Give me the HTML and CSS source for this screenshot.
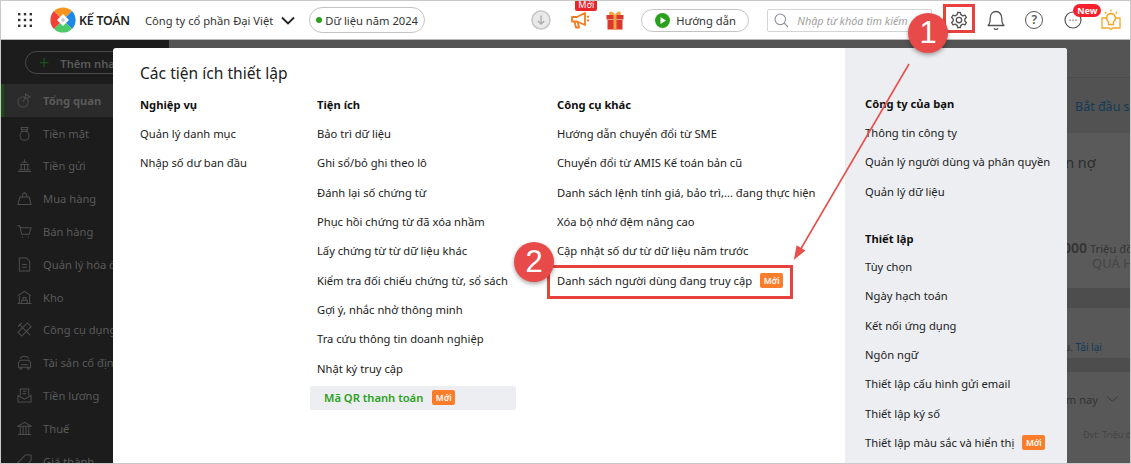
FILE: index.html
```html
<!DOCTYPE html>
<html lang="en">
<head>
    <title>Kế toán</title>
    <link rel="stylesheet" href="styles.css">
</head>
<body>
<div class="app">
    <header class="top_bar">
        <svg class="grid_icon" width="14" height="14" viewBox="0 0 14 14" fill="#333">
            <rect x="0" y="0" width="2.4" height="2.4"/><rect x="5.8" y="0" width="2.4" height="2.4"/><rect x="11.6" y="0" width="2.4" height="2.4"/>
            <rect x="0" y="5.8" width="2.4" height="2.4"/><rect x="5.8" y="5.8" width="2.4" height="2.4"/><rect x="11.6" y="5.8" width="2.4" height="2.4"/>
            <rect x="0" y="11.6" width="2.4" height="2.4"/><rect x="5.8" y="11.6" width="2.4" height="2.4"/><rect x="11.6" y="11.6" width="2.4" height="2.4"/>
        </svg>
        <svg class="logo" width="26" height="26" viewBox="0 0 26 26">
            <path d="M13 13 L4 4 A13 13 0 0 1 22 4 Z" fill="#f7941d"/>
            <path d="M13 13 L22 4 A13 13 0 0 1 22 22 Z" fill="#1e88e5"/>
            <path d="M13 13 L22 22 A13 13 0 0 1 4 22 Z" fill="#4cca6a"/>
            <path d="M13 13 L4 22 A13 13 0 0 1 4 4 Z" fill="#ef4136"/>
            <path d="M13 7 L19 13 L13 19 L7 13 Z" fill="#fff"/>
            <path d="M13 10.5 L15.5 13 L13 15.5 L10.5 13 Z" fill="#ccc"/>
        </svg>
        <span class="brand">KẾ TOÁN</span>
        <span class="company">Công ty cổ phần Đại Việt</span>
        <svg class="chevron" width="14" height="9" viewBox="0 0 14 9" fill="none" stroke="#222" stroke-width="1.8"><path d="M1 1.5 L7 7.5 L13 1.5"/></svg>
        <div class="year_pill"><i class="dot"></i>Dữ liệu năm 2024</div>

        <svg class="download" width="20" height="20" viewBox="0 0 20 20" fill="none">
            <circle cx="10" cy="10" r="9" fill="#e9e9e9" stroke="#c6c6c6" stroke-width="1.5"/>
            <path d="M10 5.5 V14 M6.8 11 L10 14.2 L13.2 11" stroke="#aaa" stroke-width="1.3"/>
        </svg>
        <div class="megaphone">
            <svg width="20" height="20" viewBox="0 0 20 20" fill="none" stroke="#f47b20" stroke-width="1.8" stroke-linejoin="round">
                <path d="M2 7 H7 L15 3 V15 L7 11.5 H2 Z"/>
                <path d="M4.5 11.5 L6 17.5 H9 L7.8 12"/>
                <path d="M17 7 L19 6.4 M17 10 L19 10.8"/>
            </svg>
            <span class="moi_red">Mới</span>
        </div>
        <svg class="gift" width="18" height="20" viewBox="0 0 18 20">
            <path d="M9 5 C6 0 2 1 3.5 5 Z M9 5 C12 0 16 1 14.500 5 Z" fill="#f2a33a"/>
            <rect x="0.5" y="5" width="17" height="4.500" fill="#d8382e"/>
            <rect x="1.500" y="10" width="15" height="9.500" fill="#d8382e"/>
            <rect x="7.500" y="5" width="3" height="14.500" fill="#f2a33a"/>
        </svg>
        <div class="guide_btn">
            <svg width="15" height="15" viewBox="0 0 15 15"><circle cx="7.500" cy="7.500" r="7.500" fill="#2ba01e"/><path d="M5.500 4 L11 7.500 L5.500 11 Z" fill="#fff"/></svg>
            Hướng dẫn
        </div>
        <div class="search_box">
            <svg width="15" height="15" viewBox="0 0 15 15" fill="none" stroke="#8a8f99" stroke-width="1.100"><circle cx="6.300" cy="6.300" r="5.300"/><path d="M10.200 10.200 L14 14"/></svg>
            <span>Nhập từ khóa tìm kiếm</span>
        </div>
        <svg class="gear" width="18" height="18" viewBox="0 0 24 24" fill="none" stroke="#555" stroke-width="1.800" stroke-linejoin="round">
            <circle cx="12" cy="12" r="3.600"/>
            <path d="M10.200 2 H13.800 L14.500 4.900 L17.200 6.400 L20 5.600 L21.800 8.700 L19.700 10.800 V13.200 L21.800 15.300 L20 18.400 L17.200 17.600 L14.500 19.100 L13.800 22 H10.200 L9.500 19.100 L6.800 17.600 L4 18.400 L2.200 15.300 L4.300 13.200 V10.800 L2.200 8.700 L4 5.600 L6.800 6.400 L9.500 4.900 Z"/>
        </svg>
        <svg class="bell" width="18" height="21" viewBox="0 0 18 21" fill="none" stroke="#555" stroke-width="1.300" stroke-linejoin="round">
            <path d="M1 15.500 C3 14 3.200 12 3.200 8.500 C3.200 4.500 5.500 1.500 9 1.500 C12.500 1.500 14.800 4.500 14.800 8.500 C14.800 12 15 14 17 15.500 Z"/>
            <path d="M6.800 18.500 C8 19.700 10 19.700 11.200 18.500"/>
        </svg>
        <div class="help">?</div>
        <div class="chat">
            <svg width="18" height="18" viewBox="0 0 18 18" fill="none" stroke="#555" stroke-width="1.200"><circle cx="9" cy="9" r="8"/><path d="M5.500 9.200 H6.500 M8.500 9.200 H9.500 M11.500 9.200 H12.500" stroke-width="1.500"/></svg>
            <span class="new_badge">New</span>
        </div>
        <svg class="bulb" width="20" height="22" viewBox="0 0 20 22" fill="none" stroke="#f5a623" stroke-width="1.300">
            <path d="M5 9 H1 V19 H8 L10 20.500 L12 19 H19 V9 H15"/>
            <path d="M10 4.500 A4.500 4.500 0 0 1 12.500 12.700 V15.500 H7.500 V12.700 A4.500 4.500 0 0 1 10 4.500 Z"/>
            <path d="M10 0.500 V2.500 M3.800 3 L5.300 4.500 M16.200 3 L14.700 4.500"/>
        </svg>
    </header>

    <div class="below">
        <aside class="sidebar">
            <div class="add_wrap"><div class="add_btn"><b>+</b>Thêm nhanh</div></div>
            <div class="side_item active">
                <svg class="side_icon" viewBox="0 0 16 16"><circle cx="6.500" cy="9.500" r="5.500"/><path d="M6.500 9.500 L9 4 M9 6 V1 L14 4 L9 6"/></svg>Tổng quan
            </div>
            <div class="side_item">
                <svg class="side_icon" viewBox="0 0 16 16"><circle cx="8" cy="10.500" r="4.800"/><path d="M5.500 6.500 L4.500 1.500 H11.500 L10.500 6.500 M5.500 4 H10.500"/></svg>Tiền mặt
            </div>
            <div class="side_item">
                <svg class="side_icon" viewBox="0 0 16 16"><path d="M1 14.500 H15 M2 12.500 H14 M3 7 H13 M5 4.500 H11 M8 1.500 V4 M4.500 7 V12.500 M8 7 V12.500 M11.500 7 V12.500"/></svg>Tiền gửi
            </div>
            <div class="side_item">
                <svg class="side_icon" viewBox="0 0 16 16"><path d="M1 14.500 L3 6.500 H13 L15 14.500 Z M5.500 6.500 C5.500 0.500 10.500 0.500 10.500 6.500"/></svg>Mua hàng
            </div>
            <div class="side_item">
                <svg class="side_icon" viewBox="0 0 16 16"><path d="M0.500 2 H3 L5 11 H13 L15 4 H3.500 M5.500 14 H6.500 M11.500 14 H12.500"/></svg>Bán hàng
            </div>
            <div class="side_item">
                <svg class="side_icon" viewBox="0 0 16 16"><path d="M2.500 1 H10 L13.500 4.500 V15 H2.500 Z M5.500 8 H10.500 M5.500 11 H10.500"/></svg>Quản lý hóa đơn
            </div>
            <div class="side_item">
                <svg class="side_icon" viewBox="0 0 16 16"><path d="M1 6 L8 1.500 L15 6 M2.500 6 V14.500 M13.500 6 V14.500 M0.500 14.500 H15.500 M5 14.500 V11 H11 V14.500 M6.500 11 V8 H9.500 V11"/></svg>Kho
            </div>
            <div class="side_item">
                <svg class="side_icon" viewBox="0 0 16 16"><path d="M2 2 L14 14 M1 5 L5 1 M11 1 L15 5 L5 15 L1 11 Z"/></svg>Công cụ dụng cụ
            </div>
            <div class="side_item">
                <svg class="side_icon" viewBox="0 0 16 16"><path d="M3 3.500 C6 1 10 1 13 3.500 M1.500 8 L3.500 5.500 H12.500 L14.500 8 V13 H1.500 Z M3 13 V15 H5 V13 M11 13 V15 H13 V13 M4 10.500 H12"/></svg>Tài sản cố định
            </div>
            <div class="side_item">
                <svg class="side_icon" viewBox="0 0 16 16"><path d="M3.500 8 V1 H12.500 V8 M1 8 L8 12 L15 8 V15 H1 Z"/><path d="M6 6 H9.500 M6.500 3.500 H10"/></svg>Tiền lương
            </div>
            <div class="side_item">
                <svg class="side_icon" viewBox="0 0 16 16"><path d="M1 5.500 L8 1.500 L15 5.500 Z M1 14.500 H15 M3.500 5.500 V14.500 M6.500 5.500 V14.500 M9.500 5.500 V14.500 M12.500 5.500 V14.500"/></svg>Thuế
            </div>
            <div class="side_item">
                <svg class="side_icon" viewBox="0 0 16 16"><path d="M1 9 L9 1 H15 V7 L7 15 Z"/></svg>Giá thành
            </div>
        </aside>
        <main class="content">
            <div class="band band_top"></div>
            <div class="band band_start"><a>Bắt đầu sử dụng</a></div>
            <div class="band band_debt">
                <p class="debt_title">Công nợ quá hạn nợ</p>
                <p class="debt_value"><b>000</b> Triệu đồng</p>
                <p class="debt_label">QUÁ HẠN</p>
            </div>
            <div class="band band_gap"></div>
            <div class="band band_reload"><span>Không có dữ liệu. <a>Tải lại</a></span></div>
            <div class="band band_gap2"></div>
            <div class="band band_period">
                <p class="period_sel">Năm nay <svg width="11" height="6" viewBox="0 0 11 6" fill="none" stroke="#3a3a3a"><path d="M0.500 0.500 L5.500 5.500 L10.500 0.500"/></svg></p>
                <p class="period_unit">Đvt: Triệu đồng</p>
            </div>
        </main>
    </div>

    <section class="popup">
        <div class="popup_left">
            <h2 class="popup_title">Các tiện ích thiết lập</h2>
            <div class="columns">
                <div class="col col_a">
                    <h3>Nghiệp vụ</h3>
                    <a>Quản lý danh mục</a>
                    <a>Nhập số dư ban đầu</a>
                </div>
                <div class="col col_b">
                    <h3>Tiện ích</h3>
                    <a>Bảo trì dữ liệu</a>
                    <a>Ghi sổ/bỏ ghi theo lô</a>
                    <a>Đánh lại số chứng từ</a>
                    <a>Phục hồi chứng từ đã xóa nhầm</a>
                    <a>Lấy chứng từ từ dữ liệu khác</a>
                    <a>Kiểm tra đối chiếu chứng từ, sổ sách</a>
                    <a>Gợi ý, nhắc nhở thông minh</a>
                    <a>Tra cứu thông tin doanh nghiệp</a>
                    <a>Nhật ký truy cập</a>
                    <a class="qr_row">Mã QR thanh toán <span class="moi">Mới</span></a>
                </div>
                <div class="col col_c">
                    <h3>Công cụ khác</h3>
                    <a>Hướng dẫn chuyển đổi từ SME</a>
                    <a>Chuyển đổi từ AMIS Kế toán bản cũ</a>
                    <a>Danh sách lệnh tính giá, bảo trì,... đang thực hiện</a>
                    <a>Xóa bộ nhớ đệm nâng cao</a>
                    <a>Cập nhật số dư từ dữ liệu năm trước</a>
                    <a>Danh sách người dùng đang truy cập <span class="moi">Mới</span></a>
                </div>
            </div>
        </div>
        <div class="popup_right">
            <h3>Công ty của bạn</h3>
            <a>Thông tin công ty</a>
            <a>Quản lý người dùng và phân quyền</a>
            <a>Quản lý dữ liệu</a>
            <h3 class="second_head">Thiết lập</h3>
            <a>Tùy chọn</a>
            <a>Ngày hạch toán</a>
            <a>Kết nối ứng dụng</a>
            <a>Ngôn ngữ</a>
            <a>Thiết lập cấu hình gửi email</a>
            <a>Thiết lập ký số</a>
            <a>Thiết lập màu sắc và hiển thị <span class="moi">Mới</span></a>
        </div>
    </section>

    <!-- annotations on top of the screenshot -->
    <div class="mark_box box_gear"></div>
    <div class="mark_box box_users"></div>
    <svg class="arrow" width="130" height="210" viewBox="0 0 130 210" fill="none" stroke="#e8504c" stroke-width="1.600">
        <path d="M116 2 L6 190"/>
        <path d="M2 196 L4.200 184.500 L11 188.500 Z" fill="#e8504c"/>
    </svg>
    <div class="step step_one">1</div>
    <div class="step step_two">2</div>
</div>
</body>
</html>
```

FILE: styles.css
```css
*{
    box-sizing:border-box;
}

body{
    margin:0;
    font-family:"Noto Sans", sans-serif;
    font-size:11.200px;
    color:#212121;
}

p,h2,h3{
    margin:0;
}

.app{
    position:relative;
    width:1131px;
    height:464px;
    border:1px solid #c9c9c9;
    overflow:hidden;
    display:flex;
    flex-direction:column;
    background:#fff;
}

/* top bar */
.top_bar{
    height:39px;
    flex:none;
    display:flex;
    align-items:center;
    background:#fff;
    border-bottom:1px solid #bbb;
    white-space:nowrap;
}
.grid_icon{
    flex:none;
    margin-left:17px;
}
.logo{
    flex:none;
    margin-left:18px;
}
.brand{
    margin-left:3px;
    width:51px;
    font-size:12.300px;
    font-weight:600;
    color:#222;
    letter-spacing:-0.2px;
}
.company{
    margin-left:15px;
    color:#333;
}
.chevron{
    flex:none;
    margin-left:8px;
}
.year_pill{
    flex:none;
    margin-left:14px;
    width:116px;
    height:26px;
    border:1px solid #c4c4c4;
    border-radius:13px;
    display:flex;
    align-items:center;
    padding-left:6px;
    color:#333;
}
.dot{
    width:6px;
    height:6px;
    border-radius:3px;
    background:#2ba01e;
    margin-right:3px;
}
.download{
    flex:none;
    margin-left:106px;
}
.megaphone{
    flex:none;
    position:relative;
    margin-left:19px;
    height:20px;
}
.moi_red{
    position:absolute;
    top:-10px;
    left:5px;
    width:22px;
    height:11px;
    background:#e8252b;
    border-radius:2px;
    color:#fff;
    font-size:9px;
    line-height:10px;
    text-align:center;
}
.gift{
    flex:none;
    margin-left:16px;
}
.guide_btn{
    flex:none;
    margin-left:17px;
    width:108px;
    height:23px;
    border:1px solid #c4c4c4;
    border-radius:12px;
    display:flex;
    align-items:center;
    gap:6px;
    padding-left:13px;
    color:#333;
}
.search_box{
    flex:none;
    margin-left:18px;
    width:165px;
    height:23px;
    border:1px solid #d4d4d4;
    border-radius:2px;
    display:flex;
    align-items:center;
    gap:8px;
    padding-left:6px;
    font-size:10.800px;
    font-style:italic;
    color:#a0a0a0;
    overflow:hidden;
}
.gear{
    flex:none;
    margin-left:18px;
}
.bell{
    flex:none;
    margin-left:19px;
}
.help{
    flex:none;
    margin-left:20px;
    width:18px;
    height:18px;
    border:1.500px solid #555;
    border-radius:50%;
    text-align:center;
    line-height:15px;
    font-size:12px;
    font-weight:600;
    color:#555;
}
.chat{
    flex:none;
    position:relative;
    margin-left:21px;
    height:18px;
}
.new_badge{
    position:absolute;
    top:-7px;
    left:9px;
    width:28px;
    height:13px;
    border-radius:7px;
    background:#f5222d;
    color:#fff;
    font-size:9px;
    font-weight:700;
    line-height:13px;
    text-align:center;
}
.bulb{
    flex:none;
    margin-left:19px;
}

/* dimmed page behind the popup */
.below{
    flex:1;
    display:flex;
    min-height:0;
    background:#555;
}
.sidebar{
    width:168px;
    flex:none;
    background:#1c1c1c;
    color:#5a5a5a;
}
.add_wrap{
    height:44px;
    padding:11px 0 0 24px;
}
.add_btn{
    height:23px;
    border:1px solid #4a4a4a;
    border-radius:12px;
    padding-left:13px;
    line-height:21px;
    font-weight:600;
    white-space:nowrap;
}
.add_btn b{
    color:#1d4f1a;
    font-size:18px;
    font-weight:400;
    margin-right:11px;
    vertical-align:-1px;
}
.side_item{
    height:32.800px;
    display:flex;
    align-items:center;
    padding-left:16px;
    white-space:nowrap;
}
.side_item.active{
    background:#2b2b2b;
    border-left:3px solid #1e4a1a;
    padding-left:13px;
    font-weight:700;
}
.side_icon{
    width:15px;
    height:15px;
    margin-right:11px;
    flex:none;
    fill:none;
    stroke:#4c4c4c;
    stroke-width:1.100;
}
.content{
    flex:1;
    min-width:0;
    color:#333;
}
.band{
    padding-left:906px;
    white-space:nowrap;
    overflow:hidden;
}
.band a{
    color:#143a57;
}
.band_top{
    height:38px;
    background:#545454;
    border-bottom:1px solid #4b4b4b;
}
.band_start{
    height:55px;
    background:#525252;
    line-height:58px;
    font-size:12.500px;
}
.band_debt{
    height:155px;
    background:#5a5a5a;
}
.debt_title{
    margin-top:19px;
    font-size:14.500px;
    color:#2d2d2d;
    margin-left:-118px;
}
.debt_value{
    margin-top:66px;
    margin-left:-12px;
}
.debt_value b{
    font-size:14px;
    font-weight:600;
}
.debt_label{
    font-size:13px;
    color:#454545;
    margin-left:17px;
    margin-top:-3px;
}
.band_gap{
    height:20px;
    background:#4d4d4d;
}
.band_reload{
    height:50px;
    background:#585858;
    font-size:10px;
    padding-top:32px;
}
.band_reload span{
    margin-left:-84px;
}
.band_gap2{
    height:14px;
    background:#4d4d4d;
}
.band_period{
    height:100px;
    background:#585858;
}
.period_sel{
    margin-top:20px;
    font-size:11.200px;
    margin-left:-24px;
}
.period_sel svg{
    margin-left:6px;
    vertical-align:2px;
}
.period_unit{
    margin-top:21px;
    font-size:9px;
    color:#444;
    margin-left:8px;
}

/* popup */
.popup{
    position:absolute;
    left:112px;
    top:47px;
    width:954px;
    height:420px;
    display:flex;
    background:#fff;
    border-radius:3px;
    overflow:hidden;
}
.popup_left{
    width:732px;
    flex:none;
    padding:14px 0 0 27px;
}
.popup_title{
    font-size:15.600px;
    font-weight:400;
    line-height:22px;
}
.columns{
    display:flex;
    margin-top:12px;
}
.col_a{
    width:177px;
}
.col_b{
    width:240px;
}
.popup_left h3,
.popup_right h3{
    font-size:11.200px;
    font-weight:700;
    line-height:18px;
    height:23px;
    color:#111;
}
.popup_left a,
.popup_right a{
    display:flex;
    align-items:center;
    height:29.330px;
    white-space:nowrap;
    color:#212121;
}
.moi{
    display:inline-block;
    width:23px;
    height:15px;
    margin-left:8px;
    border-radius:2px;
    background:#f97d2a;
    color:#fff;
    font-size:8.500px;
    font-weight:600;
    line-height:15px;
    text-align:center;
}
.popup_left a.qr_row{
    margin-left:-7px;
    width:206px;
    height:24px;
    margin-top:3px;
    padding-left:14px;
    background:#eceef2;
    border-radius:2px;
    color:#2ba01e;
    font-weight:600;
}
.qr_row .moi{
    margin-left:9px;
}
.popup_right{
    flex:1;
    background:#eceef2;
    padding:47px 0 0 20px;
}
.popup_right .second_head{
    margin-top:24px;
    height:22px;
}

/* annotations */
.mark_box{
    position:absolute;
    border:3px solid #e8423f;
}
.box_gear{
    left:942px;
    top:3px;
    width:32px;
    height:29px;
}
.box_users{
    left:546px;
    top:264px;
    width:246px;
    height:34px;
}
.arrow{
    position:absolute;
    left:792px;
    top:61px;
}
.step{
    position:absolute;
    width:40px;
    height:40px;
    border-radius:50%;
    background:#e84a4a;
    color:#fff;
    font-family:"Liberation Sans", sans-serif;
    font-size:31px;
    line-height:40px;
    text-align:center;
    box-shadow:0 2px 4px rgba(0,0,0,0.35);
}
.step_one{
    left:907px;
    top:12px;
}
.step_two{
    left:513px;
    top:241px;
}
```
